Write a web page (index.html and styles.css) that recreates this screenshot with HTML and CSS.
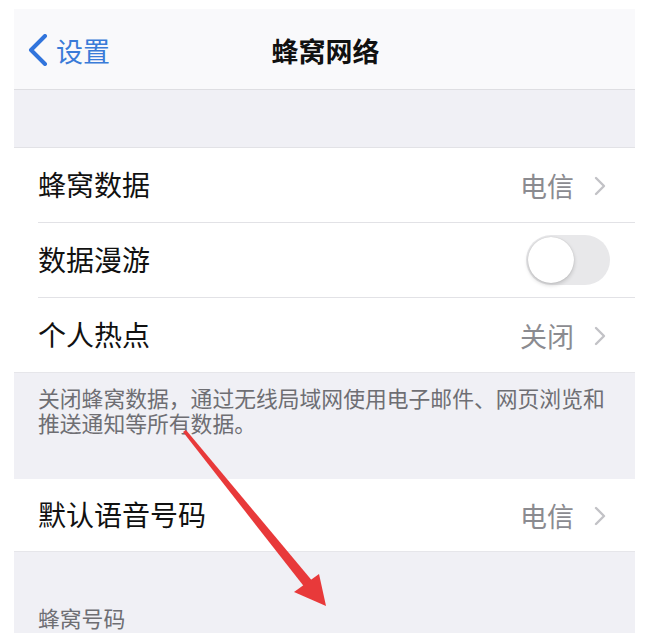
FILE: index.html
```html
<!DOCTYPE html>
<html lang="zh-CN">
<head>
<meta charset="utf-8">
<title>蜂窝网络</title>
<link rel="stylesheet" href="styles.css">
</head>
<body>
<div class="frame">
  <div class="phone">
    <header class="nav">
      <div class="back">
        <svg class="back-icon" width="20" height="32" viewBox="0 0 20 32"><path d="M17 2 L3 16 L17 30" fill="none" stroke="#3174dc" stroke-width="4" stroke-linecap="round" stroke-linejoin="round"/></svg>
        <span class="back-text">设置</span>
      </div>
      <div class="title">蜂窝网络</div>
    </header>
    <div class="spacer"></div>
    <section class="group">
      <div class="row">
        <span class="label">蜂窝数据</span>
        <span class="value">电信<svg class="chev" width="12" height="20" viewBox="0 0 12 20"><path d="M2 2 L10 10 L2 18" fill="none" stroke="#c2c2c6" stroke-width="2.4" stroke-linecap="round" stroke-linejoin="round"/></svg></span>
      </div>
      <div class="row">
        <span class="label">数据漫游</span>
        <span class="toggle"><span class="knob"></span></span>
      </div>
      <div class="row">
        <span class="label">个人热点</span>
        <span class="value">关闭<svg class="chev" width="12" height="20" viewBox="0 0 12 20"><path d="M2 2 L10 10 L2 18" fill="none" stroke="#c2c2c6" stroke-width="2.4" stroke-linecap="round" stroke-linejoin="round"/></svg></span>
      </div>
    </section>
    <p class="footer">关闭蜂窝数据，通过无线局域网使用电子邮件、网页浏览和推送通知等所有数据。</p>
    <section class="group">
      <div class="row single">
        <span class="label">默认语音号码</span>
        <span class="value">电信<svg class="chev" width="12" height="20" viewBox="0 0 12 20"><path d="M2 2 L10 10 L2 18" fill="none" stroke="#c2c2c6" stroke-width="2.4" stroke-linecap="round" stroke-linejoin="round"/></svg></span>
      </div>
    </section>
    <div class="section-head">蜂窝号码</div>
  </div>
  <svg class="arrow" width="659" height="633" viewBox="0 0 659 633">
    <polygon points="183,432 186,430 314,583 306,589" fill="#e8393a"/>
    <polygon points="294,592 319,574 326,606" fill="#e8393a"/>
  </svg>
</div>
</body>
</html>
```
FILE: styles.css
```css
html, body {
  margin: 0;
  padding: 0;
  background: #ffffff;
}
body {
  font-family: "Noto Sans CJK SC", "Noto Sans", sans-serif;
  overflow: hidden;
}
.frame {
  position: relative;
  width: 659px;
  height: 633px;
  padding: 9px 0 0 14px;
  box-sizing: border-box;
  overflow: hidden;
}
.phone {
  width: 621px;
  background: #f0f0f5;
}
.nav {
  height: 80px;
  background: #f9f9fb;
  border-bottom: 1px solid #dedee2;
  display: flex;
  align-items: center;
  justify-content: center;
  position: relative;
}
.back {
  position: absolute;
  left: 14px;
  top: 0;
  bottom: 0;
  display: flex;
  align-items: center;
  gap: 8px;
}
.back-text {
  color: #3a7bd8;
  font-size: 27px;
  line-height: 1;
}
.title {
  font-size: 27px;
  font-weight: 700;
  color: #111;
  line-height: 1;
  margin-left: 2px;
  margin-top: 2px;
}
.back-icon { margin-top: 2px; }
.back-text { margin-top: 2px; }
.spacer {
  height: 57px;
  border-bottom: 1px solid #e2e2e6;
}
.group {
  background: #ffffff;
  padding-left: 24px;
  border-bottom: 1px solid #e6e6ea;
}
.row {
  height: 74px;
  display: flex;
  align-items: center;
  justify-content: space-between;
  padding-right: 25px;
  border-bottom: 1px solid #e2e2e6;
}
.row:last-child { border-bottom: none; }
.row.single { height: 72px; }
.label {
  font-size: 28px;
  color: #111;
  line-height: 1;
  margin-top: -2px;
}
.value {
  display: flex;
  align-items: center;
  gap: 20px;
  font-size: 27px;
  color: #8b8b90;
  line-height: 1;
  padding-right: 4px;
}
.chev { margin-top: 1px; }
.toggle {
  width: 84px;
  height: 50px;
  border-radius: 25px;
  background: #e8e8ea;
  box-sizing: border-box;
  position: relative;
}
.knob {
  position: absolute;
  left: 2px;
  top: 2px;
  width: 46px;
  height: 46px;
  border-radius: 50%;
  background: #ffffff;
  box-shadow: 0 2px 4px rgba(0,0,0,0.18), 0 0 1px rgba(0,0,0,0.2);
}
.footer {
  margin: 0;
  padding: 12px 24px 44px 24px;
  font-size: 21.8px;
  line-height: 25px;
  color: #6e6e73;
}
.section-head {
  padding: 53px 24px 0 24px;
  font-size: 21.8px;
  line-height: 25px;
  color: #6e6e73;
  height: 60px;
}
.arrow {
  position: absolute;
  left: 0;
  top: 0;
  pointer-events: none;
}
```
